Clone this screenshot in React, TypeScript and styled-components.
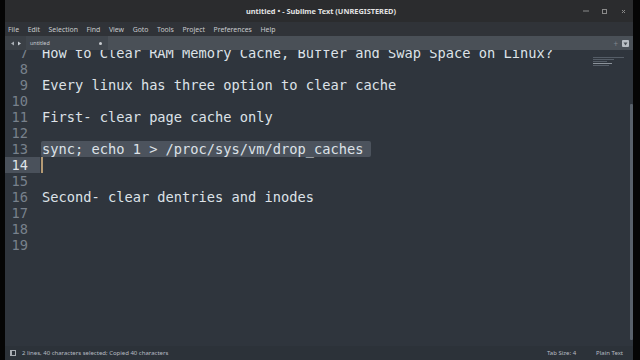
import React from "react";
import styled, { createGlobalStyle } from "styled-components";

const Global = createGlobalStyle`
  html, body { margin: 0; padding: 0; background: #000; }
  #root { width: 640px; height: 360px; }
`;

const Screen = styled.div`
  width: 640px;
  height: 360px;
  background: #050505;
  display: flex;
  padding: 0 7px 0 5px;
  box-sizing: border-box;
  overflow: hidden;
`;

const Window = styled.div`
  flex: 1;
  display: flex;
  flex-direction: column;
  min-width: 0;
  font-family: "Noto Sans", "Open Sans", sans-serif;
`;

const TitleBar = styled.div`
  height: 22px;
  background: #2b2c2e;
  position: relative;
  display: flex;
  align-items: center;
  justify-content: center;
  color: #e2e2e2;
  font-size: 7.4px;
  font-weight: 700;
  padding-left: 4px;
`;

const Controls = styled.div`
  position: absolute;
  right: 6px;
  top: 0;
  height: 22px;
  display: flex;
  align-items: center;
  gap: 12px;
`;

const Ctl = styled.span`
  width: 7px;
  height: 7px;
  display: flex;
  align-items: center;
  justify-content: center;
`;

const MenuBar = styled.div`
  height: 14px;
  background: #303338;
  display: flex;
  align-items: center;
  gap: 8.6px;
  padding-left: 3px;
  color: #c9cbce;
  font-size: 6.9px;
`;

const TabBar = styled.div`
  height: 14px;
  background: #4a5057;
  display: flex;
  align-items: stretch;
  position: relative;
`;

const Arrows = styled.div`
  width: 21px;
  display: flex;
  align-items: center;
  justify-content: center;
  gap: 2px;
  background: #3b4046;
`;

const Tab = styled.div`
  width: 82px;
  background: #40464d;
  display: flex;
  align-items: center;
  justify-content: space-between;
  padding: 0 6px 0 4px;
  box-sizing: border-box;
  color: #c8ccd0;
  font-size: 5.4px;
`;

const Dot = styled.span`
  width: 3px;
  height: 3px;
  border-radius: 50%;
  background: #c8ccd0;
`;

const TabRight = styled.div`
  position: absolute;
  right: 4px;
  top: 0;
  height: 14px;
  display: flex;
  align-items: center;
  gap: 4px;
  color: #80868d;
  font-size: 8px;
`;

const Editor = styled.div`
  flex: 1;
  background: #2f353d;
  position: relative;
  overflow: hidden;
`;

const Lines = styled.div`
  margin-top: -5px;
  font-family: "DejaVu Sans Mono", monospace;
  font-size: 13.7px;
`;

const Row = styled.div`
  height: 16px;
  display: flex;
  align-items: center;
  white-space: pre;
`;

const Num = styled.div<{ $active?: boolean }>`
  width: 35px;
  height: 16px;
  line-height: 16px;
  padding-right: 12px;
  box-sizing: border-box;
  text-align: right;
  color: ${(p) => (p.$active ? "#dfe3e8" : "#78818c")};
  background: ${(p) => (p.$active ? "#4a515b" : "transparent")};
  flex: none;
`;

const Code = styled.div`
  margin-left: 2px;
  height: 16px;
  line-height: 16px;
  color: #dde2e8;
  position: relative;
`;

const Sel = styled.span`
  background: #4c535d;
  padding: 0 8px 0 1px;
  margin-left: -1px;
  border-radius: 2px;
  display: inline-block;
  height: 16px;
`;

const Caret = styled.span`
  position: absolute;
  left: -1px;
  top: 0;
  width: 2px;
  height: 16px;
  background: #b49a74;
`;

const Minimap = styled.div`
  position: absolute;
  right: 8px;
  top: 7px;
  width: 32px;
  display: flex;
  flex-direction: column;
  gap: 1px;
`;

const MiniLine = styled.div<{ $w: number; $sel?: boolean }>`
  height: 1px;
  width: ${(p) => p.$w}px;
  background: ${(p) => (p.$sel ? "#8c939b" : "#555d67")};
`;

const Scroll = styled.div`
  position: absolute;
  right: 0;
  top: 54px;
  bottom: 6px;
  width: 3px;
  background: #59616b;
  border-radius: 1px;
`;

const StatusBar = styled.div`
  height: 14px;
  background: #2c3239;
  display: flex;
  align-items: center;
  padding: 0 10px 0 5px;
  color: #b7bcc2;
  font-size: 6px;
`;

const Panel = styled.span`
  width: 6px;
  height: 6px;
  border: 1px solid #a8adb3;
  box-sizing: border-box;
  border-left-width: 2px;
  margin-right: 6px;
`;

const Spacer = styled.div`
  flex: 1;
`;

const StatusItem = styled.span<{ $gap?: number }>`
  margin-left: ${(p) => p.$gap ?? 0}px;
`;

const lines: { n: number; t: string }[] = [
  { n: 7, t: "How to Clear RAM Memory Cache, Buffer and Swap Space on Linux?" },
  { n: 8, t: "" },
  { n: 9, t: "Every linux has three option to clear cache" },
  { n: 10, t: "" },
  { n: 11, t: "First- clear page cache only" },
  { n: 12, t: "" },
  { n: 13, t: "sync; echo 1 > /proc/sys/vm/drop_caches" },
  { n: 14, t: "" },
  { n: 15, t: "" },
  { n: 16, t: "Second- clear dentries and inodes" },
  { n: 17, t: "" },
  { n: 18, t: "" },
  { n: 19, t: "" },
];

const menus = ["File", "Edit", "Selection", "Find", "View", "Goto", "Tools", "Project", "Preferences", "Help"];

export default function App() {
  return (
    <>
      <Global />
      <Screen>
        <Window>
          <TitleBar>
            untitled • - Sublime Text (UNREGISTERED)
            <Controls>
              <Ctl>
                <svg width="6" height="2" viewBox="0 0 6 2"><rect y="0.5" width="6" height="1" fill="#8a8a8a" /></svg>
              </Ctl>
              <Ctl>
                <svg width="5" height="5" viewBox="0 0 5 5"><rect x="0.5" y="0.5" width="4" height="4" fill="none" stroke="#8a8a8a" strokeWidth="1" /></svg>
              </Ctl>
              <Ctl>
                <svg width="5" height="5" viewBox="0 0 5 5"><path d="M1 1L4 4M4 1L1 4" stroke="#8a8a8a" strokeWidth="1" /></svg>
              </Ctl>
            </Controls>
          </TitleBar>
          <MenuBar>
            {menus.map((m) => (
              <span key={m}>{m}</span>
            ))}
          </MenuBar>
          <TabBar>
            <Arrows>
              <svg width="5" height="5" viewBox="0 0 5 5"><path d="M4 0.5L1 2.5L4 4.5Z" fill="#a9aeb4" /></svg>
              <svg width="5" height="5" viewBox="0 0 5 5"><path d="M1 0.5L4 2.5L1 4.5Z" fill="#c9ced4" /></svg>
            </Arrows>
            <Tab>
              <span>untitled</span>
              <Dot />
            </Tab>
            <TabRight>
              <span>+</span>
              <svg width="7" height="7" viewBox="0 0 7 7"><rect width="7" height="7" rx="1" fill="#b9bec4" /><path d="M1.5 2.5L5.5 2.5L3.5 5.5Z" fill="#4a5057" /></svg>
            </TabRight>
          </TabBar>
          <Editor>
            <Lines>
              {lines.map((l) => (
                <Row key={l.n}>
                  <Num $active={l.n === 14}>{l.n}</Num>
                  <Code>
                    {l.n === 13 ? <Sel>{l.t}</Sel> : l.t}
                    {l.n === 14 && <Caret />}
                  </Code>
                </Row>
              ))}
            </Lines>
            <Minimap>
              <MiniLine $w={31} />
              <MiniLine $w={21} />
              <MiniLine $w={14} />
              <MiniLine $w={19} $sel />
              <MiniLine $w={16} />
            </Minimap>
            <Scroll />
          </Editor>
          <StatusBar>
            <Panel />
            <span>2 lines, 40 characters selected; Copied 40 characters</span>
            <Spacer />
            <StatusItem>Tab Size: 4</StatusItem>
            <StatusItem $gap={20}>Plain Text</StatusItem>
          </StatusBar>
        </Window>
      </Screen>
    </>
  );
}
